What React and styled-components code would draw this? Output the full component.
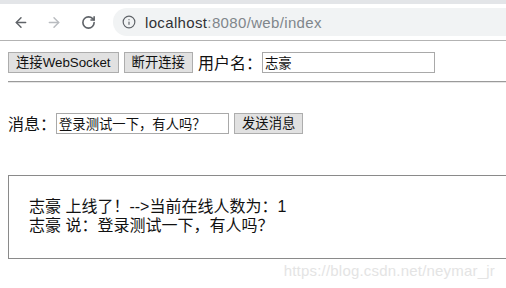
import React from "react";
import styled, { createGlobalStyle } from "styled-components";
import { ArrowLeft, ArrowRight, RotateCw, Info } from "lucide-react";

const GlobalStyle = createGlobalStyle`
  html, body {
    margin: 0;
    padding: 0;
    background: #ffffff;
    overflow: hidden;
  }
  body {
    width: 506px;
    height: 288px;
    font-family: "Liberation Sans", "Noto Sans CJK SC", sans-serif;
    color: #111;
  }
`;

const Screen = styled.div`
  position: relative;
  width: 506px;
  height: 288px;
  overflow: hidden;
`;

const TopStrip = styled.div`
  height: 4px;
  background: #e3e5e8;
`;

const Toolbar = styled.div`
  height: 36px;
  display: flex;
  align-items: center;
  padding-left: 13px;
  background: #ffffff;
  border-bottom: 1px solid #b3b3b3;
`;

const NavButton = styled.div`
  width: 16px;
  height: 16px;
  margin-right: ${(p) => p.$gap}px;
  display: flex;
  align-items: center;
  justify-content: center;
  color: ${(p) => (p.$disabled ? "#b9bcc0" : "#5f6368")};
`;

const Omnibox = styled.div`
  flex: 1;
  height: 28px;
  margin-left: 1px;
  border-radius: 14px 0 0 14px;
  background: #f1f3f4;
  display: flex;
  align-items: center;
  padding-left: 9px;
  font-family: "Liberation Sans", sans-serif;
  font-size: 15px;
  letter-spacing: 0.35px;
`;

const InfoIcon = styled.span`
  display: flex;
  color: #5f6368;
  margin-right: 9px;
`;

const Host = styled.span`
  color: #303134;
`;

const Path = styled.span`
  color: #80868b;
`;

const Page = styled.div`
  padding-left: 8px;
`;

const Row = styled.div`
  display: flex;
  align-items: center;
  height: 21px;
  margin-top: ${(p) => p.$top}px;
`;

const Button = styled.button`
  height: 21px;
  padding: 0 7px;
  margin-right: 5px;
  font-family: "Liberation Sans", "Noto Sans CJK SC", sans-serif;
  font-size: 13.33px;
  line-height: 19px;
  color: #111;
  background: #e1e1e1;
  border: 1px solid #adadad;
  border-radius: 0;
  box-sizing: border-box;
  white-space: nowrap;
`;

const Label = styled.span`
  font-family: "Noto Sans CJK SC", "Liberation Sans", sans-serif;
  font-size: 16px;
  line-height: 21px;
  color: #111;
`;

const TextInput = styled.div`
  width: ${(p) => p.$width}px;
  height: 21px;
  margin-right: 5px;
  box-sizing: border-box;
  border: 1px solid #a9a9a9;
  padding: 0 2px;
  font-family: "Noto Sans CJK SC", "Liberation Sans", sans-serif;
  font-size: 13.33px;
  line-height: 19px;
  color: #111;
  white-space: nowrap;
  overflow: hidden;
`;

const Rule = styled.div`
  margin-top: 8px;
  height: 0;
  border-top: 1px solid #9a9a9a;
  border-bottom: 1px solid #e6e6e6;
`;

const MessageBox = styled.div`
  margin-top: 41px;
  height: 84px;
  box-sizing: border-box;
  border: 1px solid #8a8a8a;
  border-right: none;
  padding: 21px 0 0 20px;
  display: flex;
  flex-direction: column;
`;

const MessageLine = styled.div`
  height: 19px;
  font-family: "Liberation Sans", "Noto Sans CJK SC", sans-serif;
  font-size: 16px;
  line-height: 19px;
  color: #111;
  white-space: nowrap;
`;

const Watermark = styled.div`
  position: absolute;
  right: 11px;
  bottom: 9px;
  font-family: "Liberation Sans", sans-serif;
  font-size: 15px;
  color: #e4e4e4;
  letter-spacing: 0.2px;
`;

const messages = [
  "志豪 上线了！-->当前在线人数为：1",
  "志豪 说：登录测试一下，有人吗？",
];

export default function App() {
  return (
    <Screen>
      <GlobalStyle />
      <TopStrip />
      <Toolbar>
        <NavButton $gap={17}>
          <ArrowLeft size={17} strokeWidth={2.2} />
        </NavButton>
        <NavButton $gap={18} $disabled>
          <ArrowRight size={17} strokeWidth={2.2} />
        </NavButton>
        <NavButton $gap={16}>
          <RotateCw size={15} strokeWidth={2.6} />
        </NavButton>
        <Omnibox>
          <InfoIcon>
            <Info size={14} strokeWidth={2} />
          </InfoIcon>
          <Host>localhost</Host>
          <Path>:8080/web/index</Path>
        </Omnibox>
      </Toolbar>
      <Page>
        <Row $top={11}>
          <Button>连接WebSocket</Button>
          <Button>断开连接</Button>
          <Label>用户名：</Label>
          <TextInput $width={173}>志豪</TextInput>
        </Row>
        <Rule />
        <Row $top={30}>
          <Label>消息：</Label>
          <TextInput $width={173}>登录测试一下，有人吗？</TextInput>
          <Button>发送消息</Button>
        </Row>
        <MessageBox>
          {messages.map((m) => (
            <MessageLine key={m}>{m}</MessageLine>
          ))}
        </MessageBox>
      </Page>
      <Watermark>https://blog.csdn.net/neymar_jr</Watermark>
    </Screen>
  );
}
